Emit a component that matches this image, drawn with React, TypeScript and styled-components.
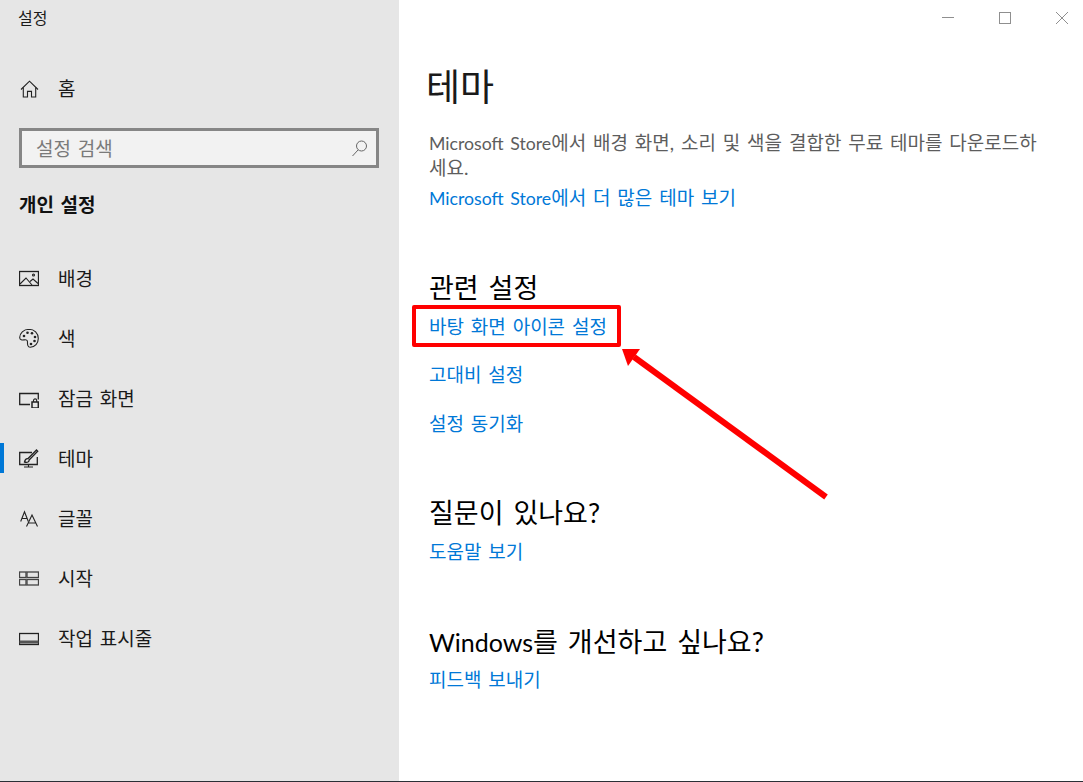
import React from "react";
import styled, { createGlobalStyle } from "styled-components";

const GlobalStyle = createGlobalStyle`
  html, body {
    margin: 0;
    padding: 0;
    background: #fff;
  }
  * {
    box-sizing: border-box;
  }
`;

const FONT = `Lato, "Noto Sans CJK KR", sans-serif`;

const Window = styled.div`
  position: relative;
  display: flex;
  width: 1083px;
  height: 782px;
  overflow: hidden;
  background: #fff;
  border-bottom: 1px solid #2b2f36;
  font-family: ${FONT};
`;

const Sidebar = styled.aside`
  display: flex;
  flex-direction: column;
  flex: 0 0 399px;
  background: #e6e6e6;
`;

const AppTitle = styled.div`
  height: 58px;
  padding: 7px 0 0 18px;
  font-size: 16px;
  line-height: 22px;
  color: #1a1a1a;
`;

const NavRow = styled.div<{ $active?: boolean }>`
  position: relative;
  display: flex;
  align-items: center;
  height: 60px;
  padding: 0 0 2px 19px;
  font-size: 19px;
  word-spacing: 2px;
  color: #1a1a1a;

  ${(p) =>
    p.$active &&
    `
    &::before {
      content: "";
      position: absolute;
      left: 0;
      top: 15px;
      width: 4px;
      height: 30px;
      background: #0078d7;
    }
  `}
`;

const NavIcon = styled.svg`
  flex: 0 0 20px;
  width: 20px;
  height: 20px;
  margin: 2px 19px 0 0;
  fill: none;
  stroke: #222;
  stroke-width: 1.1;
`;

const SearchBox = styled.div`
  display: flex;
  align-items: center;
  justify-content: space-between;
  width: 360px;
  height: 40px;
  margin: 10px 0 0 19px;
  padding: 0 7px 2px 14px;
  background: #f2f2f2;
  border: 3px solid #868686;
  font-size: 19px;
  word-spacing: 2px;
  color: #7a7a7a;
`;

const SearchIcon = styled.svg`
  width: 18px;
  height: 18px;
  margin-top: 2px;
  fill: none;
  stroke: #666;
  stroke-width: 1;
`;

const GroupTitle = styled.div`
  height: 80px;
  padding: 22px 0 0 19px;
  font-size: 19px;
  word-spacing: 2px;
  line-height: 30px;
  font-weight: 700;
  color: #111;
`;

const Main = styled.main`
  position: relative;
  flex: 1;
  padding: 65px 30px 0 30px;
`;

const PageTitle = styled.h1`
  margin: 0 0 0 -3px;
  height: 66px;
  font-size: 37px;
  line-height: 44px;
  font-weight: 400;
  color: #1a1a1a;
`;

const Description = styled.p`
  margin: 0;
  width: 625px;
  font-size: 19px;
  word-spacing: 2px;
  line-height: 24px;
  color: #5d5d5d;
`;

const Latin = styled.span<{ $size: number }>`
  font-size: ${(p) => p.$size}px;
`;

const SectionTitle = styled.h2<{ $gap: number }>`
  margin: ${(p) => p.$gap}px 0 0 0;
  font-size: 27px;
  word-spacing: 3px;
  line-height: 32px;
  font-weight: 400;
  color: #000;
`;

const LinkRow = styled.div<{ $gap?: number }>`
  margin-top: ${(p) => p.$gap ?? 0}px;
  height: 24px;
  font-size: 19px;
  word-spacing: 2px;
  line-height: 24px;
  color: #0078d7;
`;

const HighlightedLink = styled.span`
  position: relative;
  display: inline-block;

  &::after {
    content: "";
    position: absolute;
    box-sizing: border-box;
    left: -17px;
    top: -10px;
    width: 209px;
    height: 42px;
    border: 4px solid #ff0000;
    border-radius: 2px;
  }
`;

const Arrow = styled.svg`
  position: absolute;
  left: -399px;
  top: 0;
  width: 1083px;
  height: 782px;
  pointer-events: none;
`;

const Caption = styled.div`
  position: absolute;
  top: 0;
  right: 0;
  display: flex;
`;

const CaptionButton = styled.svg`
  display: block;
  width: 57px;
  height: 36px;
  fill: none;
  stroke: #8f8f8f;
  stroke-width: 1;
`;

const HomeGlyph = (
  <>
    <path d="M2 11.500 10.500 3.200l8.500 8.300" />
    <path d="M4.300 9.500v9.500h4.200v-5.600h4v5.600h4.200V9.500" />
  </>
);
const BackgroundGlyph = (
  <>
    <rect x="0.500" y="3.500" width="19" height="14" strokeWidth="1.300" />
    <path d="M1 16l6-6 6 7M11 13.500l3-2.500 5 4.500" />
    <circle cx="14.500" cy="7" r="1" />
  </>
);
const PaletteGlyph = (
  <>
    <path d="M10 1.300C4.500 1.300.7 5.200.7 9.500c0 2.600 2.600 2.800 4.400 2.400 2.200-.5 3.600.3 3.400 2.400-.2 2.300.3 5 2.800 4.900 4.600-.2 8-4 8-8.600C19.300 5.200 15.300 1.300 10 1.300z" />
    <g fill="#222" stroke="none">
      <circle cx="5" cy="8" r="1.300" />
      <circle cx="8.500" cy="4.800" r="1.300" />
      <circle cx="13" cy="5.300" r="1.300" />
      <circle cx="16" cy="9" r="1.300" />
      <circle cx="15.500" cy="13" r="1.300" />
      <circle cx="12" cy="16" r="1.300" />
    </g>
  </>
);
const LockGlyph = (
  <>
    <path d="M11 16.500H.7V5.500h18.600v6" strokeWidth="1.300" />
    <rect x="13" y="14" width="6.300" height="6" strokeWidth="1.500" />
    <path d="M14.500 14v-1.500a1.600 1.600 0 0 1 3.200 0V14" />
  </>
);
const ThemeGlyph = (
  <>
    <path d="M13 4.500H.7v12h17.600V9" strokeWidth="1.300" />
    <path d="M5 19h9M9.500 16.500V19" />
    <path d="M5.500 14c.5-2.500 1.500-3.500 3.300-3.300L17.500 2l1.200 1.200-8.600 8.800c.2 1.800-1.600 2.800-4.600 2z" strokeWidth="1.300" />
  </>
);
const FontGlyph = (
  <>
    <path d="M1.700 13.500 5.500 3.700l3.800 9.800M3 10.500h5" />
    <path d="M7.500 18.500 13 7l5.500 11.500M9.500 15h7" />
  </>
);
const StartGlyph = (
  <g strokeWidth="1.300" stroke="#444">
    <rect x="0.500" y="4" width="6.500" height="5.500" />
    <rect x="8" y="4" width="11.500" height="5.500" />
    <rect x="0.500" y="11.500" width="6.500" height="5.500" />
    <rect x="8" y="11.500" width="11.500" height="5.500" />
  </g>
);
const TaskbarGlyph = (
  <>
    <rect x="0.500" y="5.500" width="19" height="11" strokeWidth="1.300" />
    <path d="M.5 14h19" stroke="#555" strokeWidth="3" />
  </>
);

const navItems = [
  { label: "배경", glyph: BackgroundGlyph },
  { label: "색", glyph: PaletteGlyph },
  { label: "잠금 화면", glyph: LockGlyph },
  { label: "테마", glyph: ThemeGlyph, active: true },
  { label: "글꼴", glyph: FontGlyph },
  { label: "시작", glyph: StartGlyph },
  { label: "작업 표시줄", glyph: TaskbarGlyph },
];

export default function App() {
  return (
    <>
      <GlobalStyle />
      <Window>
        <Sidebar>
          <AppTitle>설정</AppTitle>
          <NavRow>
            <NavIcon viewBox="0 0 20 20">{HomeGlyph}</NavIcon>
            홈
          </NavRow>
          <SearchBox>
            설정 검색
            <SearchIcon viewBox="0 0 18 18">
              <circle cx="10.500" cy="7" r="5" />
              <path d="M7 11 1.500 17" />
            </SearchIcon>
          </SearchBox>
          <GroupTitle>개인 설정</GroupTitle>
          {navItems.map((item) => (
            <NavRow key={item.label} $active={item.active}>
              <NavIcon viewBox="0 0 20 20">{item.glyph}</NavIcon>
              {item.label}
            </NavRow>
          ))}
        </Sidebar>
        <Main>
          <PageTitle>테마</PageTitle>
          <Description>
            <Latin $size={17.7}>Microsoft Store</Latin>에서 배경 화면, 소리 및 색을 결합한 무료 테마를 다운로드하세요.
          </Description>
          <LinkRow $gap={6}>
            <Latin $size={17.7}>Microsoft Store</Latin>에서 더 많은 테마 보기
          </LinkRow>

          <SectionTitle $gap={62}>관련 설정</SectionTitle>
          <LinkRow $gap={11}>
            <HighlightedLink>바탕 화면 아이콘 설정</HighlightedLink>
          </LinkRow>
          <LinkRow $gap={24}>고대비 설정</LinkRow>
          <LinkRow $gap={25}>설정 동기화</LinkRow>

          <SectionTitle $gap={61}>질문이 있나요?</SectionTitle>
          <LinkRow $gap={11}>도움말 보기</LinkRow>

          <SectionTitle $gap={62}>
            <Latin $size={25}>Windows</Latin>를 개선하고 싶나요?
          </SectionTitle>
          <LinkRow $gap={10}>피드백 보내기</LinkRow>

          <Arrow viewBox="0 0 1083 782">
            <path d="M826 497 634 357" stroke="#ff0000" strokeWidth="6" fill="none" />
            <polygon points="622,349 640,349 628,366" fill="#ff0000" />
          </Arrow>
        </Main>
        <Caption>
          <CaptionButton viewBox="0 0 57 36">
            <path d="M30 17.500h12" />
          </CaptionButton>
          <CaptionButton viewBox="0 0 57 36">
            <rect x="30.500" y="12.500" width="11" height="11" />
          </CaptionButton>
          <CaptionButton viewBox="0 0 57 36">
            <path d="M30 12l12 12M42 12 30 24" />
          </CaptionButton>
        </Caption>
      </Window>
    </>
  );
}
